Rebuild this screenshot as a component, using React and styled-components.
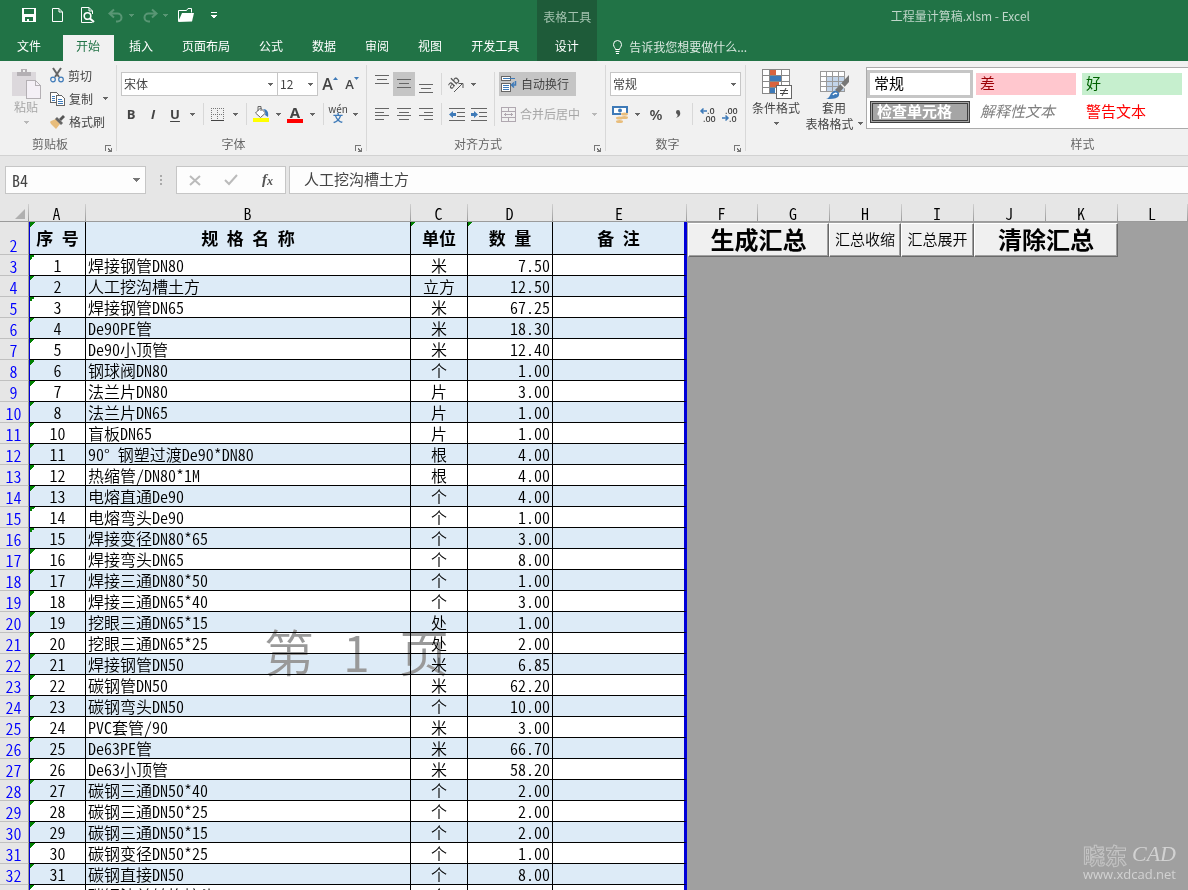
import styled, { createGlobalStyle, css } from "styled-components"

const GlobalStyle = createGlobalStyle`
  * {
    box-sizing: border-box;
  }

  body {
    margin: 0;
    overflow: hidden;
    background: #e6e6e6;
    font-family: "Noto Sans CJK SC", "Noto Sans", sans-serif;
    font-size: 12px;
    line-height: 16px;
    color: #444;
  }

  button, input, select {
    margin: 0;
    padding: 0;
    border: 0;
    border-radius: 0;
    background: transparent;
    font: inherit;
    color: inherit;
  }

  svg {
    overflow: visible;
  }
`

const App = styled.div`
  display: flex;
  flex-direction: column;
  height: 100vh;
  overflow: hidden;
`

/* ---------- title bar and tabs ---------- */

const Header = styled.header`
  display: flex;
  flex: none;
  height: 61px;
  background: #217346;
  color: #fff;
`

const HeaderPart = styled.div`
  display: flex;
  flex-direction: column;
  flex: ${({ $grow }) => ($grow ? 1 : "none")};
`

const QuickAccess = styled.div`
  display: flex;
  align-items: center;
  height: 35px;
  padding: 0 0 5px 15px;
`

const QuickButton = styled.button`
  display: flex;
  align-items: center;
  justify-content: center;
  gap: 5px;
  width: ${({ $w }) => $w}px;
  height: 24px;
  opacity: ${({ disabled }) => (disabled ? 0.25 : 1)};
`

const TabList = styled.nav`
  display: flex;
  gap: 2px;
  padding: 0 4px;
`

const Tab = styled.button`
  height: 26px;
  padding: 0 14px 4px 13px;
  white-space: nowrap;

  ${({ $wide }) => $wide && css`
    padding-right: 20px;
  `}

  ${({ $active }) => $active && css`
    background: #f1f1f1;
    color: #217346;
  `}
`

const ContextGroup = styled.div`
  display: flex;
  flex-direction: column;
  align-items: center;
  width: 60px;
  background: #1e5b39;
`

const ContextTitle = styled.span`
  height: 35px;
  padding-top: 9px;
  color: #a3c2af;
`

const WindowTitle = styled.div`
  height: 35px;
  padding: 8px 158px 0 0;
  text-align: right;
  color: #bfd6c9;
`

const TellMe = styled.button`
  display: flex;
  align-items: center;
  gap: 6px;
  height: 26px;
  padding: 0 0 2px 15px;
  color: #d9e8df;
`

/* ---------- ribbon ---------- */

const Ribbon = styled.div`
  display: flex;
  flex: none;
  height: 95px;
  background: #f1f1f1;
  border-bottom: 1px solid #d2d2d2;
  overflow: hidden;
`

const GroupBox = styled.section`
  display: flex;
  flex-direction: column;
  flex: none;
  width: ${({ $w }) => $w}px;
  background: linear-gradient(#d8d8d8, #d8d8d8) right 4px / 1px 86px no-repeat;
`

const GroupBody = styled.div`
  display: flex;
  height: 74px;
  padding: 0 4px;
`

const GroupFoot = styled.div`
  display: flex;
  align-items: center;
  height: 18px;
  padding-right: 1px;
  color: #666;
`

const GroupLabel = styled.span`
  flex: 1;
  text-align: center;
`

const Launcher = styled.button`
  width: 16px;
  height: 16px;
  padding-top: 4px;
`

const Rows = styled.div`
  display: flex;
  flex-direction: column;
  gap: 6px;
  padding-top: 11px;
`

const Row = styled.div`
  display: flex;
  align-items: center;
  height: 24px;
`

const Tool = styled.button`
  display: flex;
  align-items: center;
  justify-content: center;
  width: ${({ $w }) => $w || 20}px;
  height: 24px;
  background: ${({ $on }) => ($on ? "#c5c5c5" : "transparent")};
`

const Letter = styled.span`
  font-family: "Open Sans", sans-serif;
  font-size: ${({ $size }) => $size || 13}px;
  font-weight: ${({ $plain }) => ($plain ? 600 : 700)};
  font-style: ${({ $italic }) => ($italic ? "italic" : "normal")};
  text-decoration: ${({ $under }) => ($under ? "underline" : "none")};
  text-underline-offset: 2px;
`

const Divider = styled.span`
  width: 1px;
  height: ${({ $tall }) => ($tall ? 54 : 22)}px;
  margin: ${({ $tall }) => ($tall ? "11px 4px 0" : "0 4px")};
  background: #d8d8d8;
`

const LabelTool = styled.button`
  display: flex;
  align-items: center;
  gap: 4px;
  height: 24px;
  padding: 0 7px 0 2px;
  white-space: nowrap;
  background: ${({ $on }) => ($on ? "#c5c5c5" : "transparent")};
  color: ${({ disabled }) => (disabled ? "#a6a6a6" : "#444")};
`

const Stack = styled.div`
  display: flex;
  flex-direction: column;
  padding-top: 3px;

  ${Row}, ${LabelTool} {
    height: 23px;
  }

  ${LabelTool} {
    padding-right: 5px;
  }
`

const BigTool = styled.button`
  display: flex;
  flex-direction: column;
  align-items: center;
  width: ${({ $w }) => $w}px;
  padding-top: 7px;
  white-space: nowrap;
  line-height: 15px;
  color: ${({ disabled }) => (disabled ? "#a6a6a6" : "#444")};
`

const CaretLine = styled.span`
  display: flex;
  align-items: center;
  gap: 4px;
  height: 16px;
`

const SelectBox = styled.label`
  display: flex;
  align-items: center;
  position: relative;
  width: ${({ $w }) => $w}px;
  height: 24px;
  background: #fff;
  border: 1px solid #c6c6c6;
  margin-right: ${({ $join }) => ($join ? "-1px" : 0)};

  select {
    width: 100%;
    height: 22px;
    padding: 0 2px 1px;
    appearance: none;
    outline: 0;
  }

  svg {
    position: absolute;
    right: 4px;
    pointer-events: none;
  }
`

const Gallery = styled.div`
  display: grid;
  grid-template-columns: repeat(5, 100px);
  grid-template-rows: 22px 22px;
  gap: 6px;
  flex: 1;
  height: 62px;
  margin-top: 6px;
  padding: 5px 3px;
  background: #fff;
  border: 1px solid #ababab;
  font-size: 15px;
  line-height: 18px;
`

const StyleCell = styled.button`
  display: flex;
  align-items: center;
  padding: 0 4px 3px;
  text-align: left;
  color: ${({ $fg }) => $fg || "#000"};
  background: ${({ $bg }) => $bg || "#fff"};
  font-style: ${({ $italic }) => ($italic ? "italic" : "normal")};
  font-weight: ${({ $bold }) => ($bold ? 700 : 400)};
  outline: ${({ $picked }) => ($picked ? "3px solid #c6c6c6" : "0")};
  border: ${({ $double }) => ($double ? "3px double #3f3f3f" : "0")};
`

/* ---------- formula bar ---------- */

const FormulaBar = styled.div`
  display: flex;
  flex: none;
  height: 48px;
  padding: 10px 0 10px 5px;
`

const Box = styled.div`
  display: flex;
  align-items: center;
  width: ${({ $w }) => $w}px;
  height: 28px;
  background: #fdfdfd;
  border: 1px solid #c6c6c6;
`

const NameInput = styled.input`
  flex: 1;
  width: 100px;
  padding-left: 6px;
  font-size: 16px;
  font-feature-settings: "hwid";
  outline: 0;
`

const Dots = styled.span`
  width: 30px;
  display: flex;
  align-items: center;
  justify-content: center;
`

const FormulaInput = styled.input`
  flex: 1;
  min-width: 0;
  height: 28px;
  margin-left: 3px;
  padding: 0 14px 4px;
  background: #fdfdfd;
  border: 1px solid #c6c6c6;
  border-right: 0;
  font-size: 15px;
  outline: 0;
`

/* ---------- sheet ---------- */

const Sheet = styled.main`
  position: relative;
  flex: 1;
  overflow: hidden;
  background: #a0a0a0;
`

const Grid = styled.table`
  width: 100%;
  table-layout: fixed;
  border-collapse: separate;
  border-spacing: 0;
  font-size: 16px;
  font-weight: 350;
  line-height: 20px;
  font-feature-settings: "hwid";
  color: #000;
`

const ColHead = styled.th`
  height: 18px;
  padding: 2px 2px 0 0;
  font-weight: 350;
  line-height: 15px;
  background: linear-gradient(#d0d0d0, #9b9b9b) right top / 1px 100% no-repeat #e6e6e6;
  border-bottom: 1px solid #9b9b9b;
`

const Corner = styled(ColHead)`
  svg {
    display: block;
    margin-left: 15px;
  }
`

const RowHead = styled.th`
  padding: 0 1px 0 0;
  vertical-align: bottom;
  font-weight: 350;
  line-height: 17px;
  color: #00f;
  background: #e6e6e6;
  border-right: 1px solid #9b9b9b;
  border-bottom: 1px solid #c0c0c0;
`

const Cell = styled.td`
  height: ${({ $head }) => ($head ? 33 : 21)}px;
  padding: 0 2px;
  white-space: pre;
  text-align: ${({ $align }) => $align || "center"};
  border-right: 1px solid #000;
  border-bottom: 1px solid #000;
  background-color: ${({ $band }) => ($band ? "#ddebf7" : "#fff")};

  ${({ $head }) => $head && css`
    font-size: 17px;
    font-weight: 700;
  `}

  ${({ $mark }) => $mark && css`
    background-image: linear-gradient(135deg, #008000 50%, transparent 50%);
    background-size: 5px 5px;
    background-repeat: no-repeat;
  `}

  ${({ $first }) => $first && css`
    border-left: 1px solid #0000d8;
  `}

  ${({ $last }) => $last && css`
    border-right: 3px solid #0000d8;
  `}
`

const OutsideCell = styled.td`
  padding: 1px 0 0 1px;
  vertical-align: top;
`

const MacroBar = styled.div`
  display: flex;
`

const MacroButton = styled.button`
  width: ${({ $w }) => $w}px;
  height: 34px;
  padding-bottom: 3px;
  background: #f0f0f0;
  border: 1px solid;
  border-color: #fff #696969 #696969 #fff;
  box-shadow: inset -1px -1px #a0a0a0;
  font-size: 15px;
  font-weight: 350;
  line-height: 28px;
  white-space: nowrap;

  ${({ $big }) => $big && css`
    font-size: 24px;
    font-weight: 700;
  `}
`

const PageMark = styled.div`
  position: absolute;
  top: 414px;
  left: 264px;
  display: flex;
  gap: 30px;
  font-size: 50px;
  font-weight: 350;
  line-height: 64px;
  font-feature-settings: "hwid";
  color: #999;
  mix-blend-mode: darken;
  pointer-events: none;
`

const SiteMark = styled.div`
  position: absolute;
  right: 12px;
  bottom: 7px;
  color: #d2d2d2;
  font-family: "Open Sans", sans-serif;
  font-size: 13px;
  line-height: 18px;
  pointer-events: none;
`

const SiteLogo = styled.div`
  display: flex;
  align-items: center;
  justify-content: flex-end;
  gap: 5px;
  height: 23px;
`

const LogoHan = styled.span`
  font-family: "Noto Sans CJK SC", sans-serif;
  font-size: 22px;
  font-weight: 700;
  color: #a0a0a0;
  -webkit-text-stroke: 1px #c4c4c4;
`

const LogoLatin = styled.span`
  font-family: "Liberation Serif", serif;
  font-size: 22px;
  font-style: italic;
`

/* ---------- icons ---------- */

const Svg = ({ w, h, children, soft }) => (
  <svg width={w} height={h} viewBox={`0 0 ${w} ${h}`} fill="none" shapeRendering={soft ? "auto" : "crispEdges"} aria-hidden="true">
    {children}
  </svg>
)

const Caret = ({ color = "#666" }) => (
  <Svg w={5} h={3}><path d="M0 0h5v1h-1v1h-1v1h-1v-1h-1v-1h-1z" fill={color} /></Svg>
)

const SaveIcon = () => (
  <Svg w={14} h={14}><path fillRule="evenodd" d="M0 0h14v14H0zM2 1v5h10V1zM3 9v4h2v-2h2v2h4V9z" fill="#fff" /></Svg>
)

const NewIcon = () => (
  <Svg w={11} h={14} soft><path d="M.5.5h6.500l3.500 3.500v9.500H.5zM7 .5V4h3.500" stroke="#fff" /></Svg>
)

const PreviewIcon = () => (
  <Svg w={14} h={16} soft>
    <path d="M11.500 15.500H.5V.5H8l3.500 3.500v3M8 .5V4h3.500" stroke="#fff" />
    <circle cx="6.500" cy="9" r="3.300" stroke="#fff" strokeWidth="1.600" />
    <path d="M9 11.500l4 3.500" stroke="#fff" strokeWidth="2" />
  </Svg>
)

const UndoIcon = () => (
  <Svg w={16} h={13} soft><path d="M6 .5L1.500 4.500 6 8.500M2 4.500h7.500a4 4 0 0 1 0 8H8" stroke="#fff" strokeWidth="2" /></Svg>
)

const RedoIcon = () => (
  <Svg w={16} h={13} soft><path d="M10 .5l4.500 4-4.500 4M14 4.500H6.500a4 4 0 0 0 0 8H8" stroke="#fff" strokeWidth="2" /></Svg>
)

const FolderIcon = () => (
  <Svg w={16} h={14} soft>
    <path d="M.5 13V2.500h8l1.500-2h3.500v4" stroke="#fff" />
    <path d="M0 14L4 5h12l-2 8.500z" fill="#fff" />
  </Svg>
)

const MoreIcon = () => (
  <Svg w={6} h={7}><path d="M0 0h6v1H0zM0 3h6v1h-1v1h-1v1H2V5H1V4H0z" fill="#fff" /></Svg>
)

const BulbIcon = () => (
  <Svg w={11} h={14} soft>
    <path d="M3.500 9.500C3.500 8 1.500 7 1.500 4.500a4 4 0 0 1 8 0c0 2.500-2 3.500-2 5zM3.500 11.500h4M4 13.500h3" stroke="#fff" />
  </Svg>
)

const LauncherIcon = () => (
  <Svg w={16} h={8}>
    <path d="M5 6V0h6v1H6v5zM8 3h1v1h1v1h1V3h1v4H8V6h1V5H8z" fill="#777" />
  </Svg>
)

const PasteIcon = () => (
  <Svg w={30} h={31}>
    <path d="M1 4h24v24H1z" fill="#dcd8dc" />
    <path d="M6 8V4h4V1h6v3h4v4z" fill="#b4b0b4" />
    <path d="M12 2h2v2h-2z" fill="#f1f1f1" />
    <path d="M15 12h9l5 5v13H15z" fill="#f4f0f6" stroke="#b4b0b4" />
    <path d="M24 12v5h5" stroke="#b4b0b4" />
  </Svg>
)

const CutIcon = () => (
  <Svg w={14} h={15} soft>
    <path d="M3 0l6 9M11 0L5 9" stroke="#666" strokeWidth="2" />
    <circle cx="3" cy="11.500" r="2.300" stroke="#3e7ab8" strokeWidth="1.200" />
    <circle cx="11" cy="11.500" r="2.300" stroke="#3e7ab8" strokeWidth="1.200" />
  </Svg>
)

const CopyIcon = () => (
  <Svg w={15} h={14}>
    <path d="M.5.5h6l2 2v8h-8z" fill="#fff" stroke="#666" />
    <path d="M2 4h3M2 6h3M2 8h3" stroke="#3e7ab8" />
    <path d="M6.500 3.500h5l3 3v7h-8z" fill="#fff" stroke="#666" />
    <path d="M8 7.500h4M8 9.500h5M8 11.500h5" stroke="#3e7ab8" />
  </Svg>
)

const BrushIcon = () => (
  <Svg w={15} h={14} soft>
    <path d="M1 6l5-2 4 5-4 5-5-5-1-2z" fill="#e8bd7c" />
    <path d="M5 4l2-2 6 6-2 2z" fill="#666" />
    <path d="M9 4l4-4 2 2-4 4z" fill="#555" />
  </Svg>
)

const SizeIcon = ({ up }) => (
  <Svg w={5} h={16} soft>
    <path d={up ? "M0 4l2.500-3L5 4z" : "M0 1h5L2.500 4z"} fill="#3e7ab8" />
  </Svg>
)

const BorderIcon = () => (
  <Svg w={14} h={13}>
    <path d="M.5 0v12M6.500 0v12M12.500 0v12M0 .5h13M0 6.500h13" stroke="#777" strokeDasharray="1 1" />
    <path d="M0 12.500h13" stroke="#444" />
  </Svg>
)

const FillIcon = () => (
  <Svg w={17} h={17} soft>
    <path d="M2.500 7l5-5 5 5-5 4.500z" fill="#fff" stroke="#666" />
    <path d="M5 5V.5h3V5" stroke="#666" />
    <path d="M10 3c4 0 6 3 5 8l-3-2c1-2 0-4-2-6z" fill="#3e7ab8" />
    <path d="M0 12h16v4H0z" fill="#ff0" />
  </Svg>
)

const FontColorBox = styled.span`
  display: flex;
  justify-content: center;
  width: 16px;
  height: 17px;
  border-bottom: 4px solid #f00;
  line-height: 12px;
`

const Pinyin = styled.span`
  display: flex;
  flex-direction: column;
  align-items: center;
  font-size: 10px;
  line-height: 8px;

  b {
    line-height: 10px;
    color: #3e7ab8;
  }
`

const Lines = ({ d }) => <Svg w={14} h={18}><path d={d} stroke="#666" /></Svg>

const alignIcons = {
  top: "M0 .5h14M2 4.500h10M0 8.500h14",
  middle: "M0 4.500h14M2 8.500h10M0 12.500h14",
  bottom: "M0 9.500h14M2 13.500h10M0 17.500h14",
  left: "M0 3.500h14M0 7.500h9M0 10.500h14M0 14.500h9",
  center: "M0 3.500h14M2 7.500h10M0 10.500h14M2 14.500h10",
  right: "M0 3.500h14M5 7.500h9M0 10.500h14M5 14.500h9",
}

const OrientIcon = () => (
  <Svg w={17} h={17} soft>
    <text x="0" y="10" transform="rotate(-45 6 8)" fontFamily="Open Sans" fontSize="11" fontWeight="600" fill="#555">ab</text>
    <path d="M6 16l8-8M10.500 7.500H15V12" stroke="#555" />
  </Svg>
)

const IndentIcon = ({ out }) => (
  <Svg w={16} h={13}>
    <path d="M0 .5h16M8 4.500h8M8 8.500h8M0 12.500h16" stroke="#666" />
    <path d={out ? "M0 6.500l4-3.500v2h3v3H4v2z" : "M7 6.500L3 3v2H0v3h3v2z"} fill="#3e7ab8" shapeRendering="auto" />
  </Svg>
)

const WrapIcon = () => (
  <Svg w={16} h={16}>
    <path d="M.5.5h9v4h-9zM.5 7.500h9v8h-9z" fill="#fff" stroke="#666" />
    <path d="M2 2.500h12M2 9.500h6M2 11.500h6M2 13.500h6" stroke="#3e7ab8" />
    <path d="M14.500 5v4H11M13 6.500L10.500 9l2.500 2.500" stroke="#3e7ab8" strokeWidth="1.500" shapeRendering="auto" />
  </Svg>
)

const MergeIcon = () => (
  <Svg w={15} h={15}>
    <path d="M.5.5h14v14H.5zM0 4.500h15M0 10.500h15M7.500 0v4M7.500 11v4M3 7.500h9M4.500 6v3M10.500 6v3" stroke="#b0a8b0" />
  </Svg>
)

const CurrencyIcon = () => (
  <Svg w={17} h={17} soft>
    <path d="M0 0h16v9H0z" fill="#3e7ab8" />
    <path d="M2 2h12v5H2z" fill="#fff" />
    <circle cx="8" cy="4.500" r="2" fill="#3e7ab8" />
    <path d="M9 7h7v6H9zM4 11h7v5H4z" fill="#f1f1f1" />
    <ellipse cx="12.500" cy="8" rx="3.500" ry="1.500" fill="#e8bd7c" />
    <ellipse cx="12.500" cy="11.500" rx="3.500" ry="1.500" fill="#e8bd7c" />
    <ellipse cx="7.500" cy="12" rx="3.500" ry="1.500" fill="#e8bd7c" />
    <ellipse cx="7.500" cy="15.500" rx="3.500" ry="1.500" fill="#e8bd7c" />
  </Svg>
)

const DecimalIcon = ({ more }) => (
  <Svg w={16} h={15} soft>
    <g fontFamily="Open Sans" fontSize="9" fontWeight="600" fill="#444">
      <text x={more ? 7 : 3} y="7">{more ? ".0" : ".00"}</text>
      <text x={more ? 3 : 7} y="15">{more ? ".00" : ".0"}</text>
    </g>
    <path d={more ? "M7 4H1M3.500 1.500L1 4l2.500 2.500" : "M0 11h6M3.500 8.500L6 11l-2.500 2.500"} stroke="#3e7ab8" strokeWidth="1.500" />
  </Svg>
)

const ConditionIcon = () => (
  <Svg w={31} h={32}>
    <path d="M1.500 1.500h27v24h-27z" fill="#fff" />
    <path d="M9 2h6v5H9zM9 14h9v5H9z" fill="#d9643f" />
    <path d="M9 8h11v5H9zM9 20h5v5H9z" fill="#3e7ab8" />
    <path d="M1.500 1.500h27v24h-27zM1 7.500h27M1 13.500h27M1 19.500h27M8.500 1v24M20.500 1v24" stroke="#888" />
    <path d="M15.500 17.500h15v13h-15z" fill="#fff" stroke="#666" />
    <path d="M19 22.500h8M19 25.500h8M25 20l-4 8" stroke="#444" shapeRendering="auto" />
  </Svg>
)

const TableStyleIcon = () => (
  <Svg w={31} h={32}>
    <path d="M1.500 3.500h24v20h-24z" fill="#fff" />
    <path d="M8 9h17v14H8z" fill="#c3d5ea" />
    <path d="M1.500 3.500h24v20h-24zM1 8.500h24M1 13.500h24M1 18.500h24M7.500 3v20M13.500 3v20M19.500 3v20" stroke="#999" />
    <g shapeRendering="auto">
      <path d="M30 7v7L20 25l-4-3z" fill="#777" />
      <path d="M22 16l4 4" stroke="#f1f1f1" strokeWidth="1.500" />
      <path d="M7 31c5-1 3-6 8-8 4-1 7 3 4 6-3 2-7 2-12 2z" fill="#3e7ab8" />
      <path d="M14 27c1-2 3-2 4-1" stroke="#fff" strokeWidth="1.500" />
    </g>
  </Svg>
)

const CornerIcon = () => (
  <Svg w={10} h={10} soft><path d="M10 0v10H0z" fill="#b0b0b0" /></Svg>
)

/* ---------- data ---------- */

const tabs = ["文件", "开始", "插入", "页面布局", "公式", "数据", "审阅", "视图", "开发工具"]

const columns = [
  ["A", 57], ["B", 325], ["C", 57], ["D", 85], ["E", 134], ["F", 71], ["G", 72],
  ["H", 72], ["I", 72], ["J", 72], ["K", 72], ["L", 72],
]

const rows = [
  ["1", "焊接钢管DN80", "米", "7.50"],
  ["2", "人工挖沟槽土方", "立方", "12.50"],
  ["3", "焊接钢管DN65", "米", "67.25"],
  ["4", "De90PE管", "米", "18.30"],
  ["5", "De90小顶管", "米", "12.40"],
  ["6", "钢球阀DN80", "个", "1.00"],
  ["7", "法兰片DN80", "片", "3.00"],
  ["8", "法兰片DN65", "片", "1.00"],
  ["10", "盲板DN65", "片", "1.00"],
  ["11", "90° 钢塑过渡De90*DN80", "根", "4.00"],
  ["12", "热缩管/DN80*1M", "根", "4.00"],
  ["13", "电熔直通De90", "个", "4.00"],
  ["14", "电熔弯头De90", "个", "1.00"],
  ["15", "焊接变径DN80*65", "个", "3.00"],
  ["16", "焊接弯头DN65", "个", "8.00"],
  ["17", "焊接三通DN80*50", "个", "1.00"],
  ["18", "焊接三通DN65*40", "个", "3.00"],
  ["19", "挖眼三通DN65*15", "处", "1.00"],
  ["20", "挖眼三通DN65*25", "处", "2.00"],
  ["21", "焊接钢管DN50", "米", "6.85"],
  ["22", "碳钢管DN50", "米", "62.20"],
  ["23", "碳钢弯头DN50", "个", "10.00"],
  ["24", "PVC套管/90", "米", "3.00"],
  ["25", "De63PE管", "米", "66.70"],
  ["26", "De63小顶管", "米", "58.20"],
  ["27", "碳钢三通DN50*40", "个", "2.00"],
  ["28", "碳钢三通DN50*25", "个", "2.00"],
  ["29", "碳钢三通DN50*15", "个", "2.00"],
  ["30", "碳钢变径DN50*25", "个", "1.00"],
  ["31", "碳钢直接DN50", "个", "8.00"],
  ["32", "碳钢法兰转换接头", "个", "1.00"],
]

/* ---------- components ---------- */

const Group = ({ label, width, launcher = true, children }) => (
  <GroupBox $w={width}>
    <GroupBody>{children}</GroupBody>
    <GroupFoot>
      <GroupLabel>{label}</GroupLabel>
      {launcher && <Launcher aria-label={label}><LauncherIcon /></Launcher>}
    </GroupFoot>
  </GroupBox>
)

const Select = ({ label, value, width, join }) => (
  <SelectBox $w={width} $join={join}>
    <select aria-label={label} defaultValue={value}>
      <option>{value}</option>
    </select>
    <Caret />
  </SelectBox>
)

const CaretTool = ({ label, color }) => (
  <Tool $w={14} aria-label={label}><Caret color={color} /></Tool>
)

const TopBar = () => (
  <Header>
    <HeaderPart>
      <QuickAccess>
        <QuickButton $w={28} aria-label="保存"><SaveIcon /></QuickButton>
        <QuickButton $w={28} aria-label="新建"><NewIcon /></QuickButton>
        <QuickButton $w={34} aria-label="打印预览"><PreviewIcon /></QuickButton>
        <QuickButton $w={32} aria-label="撤消" disabled><UndoIcon /><Caret color="#fff" /></QuickButton>
        <QuickButton $w={36} aria-label="恢复" disabled><RedoIcon /><Caret color="#fff" /></QuickButton>
        <QuickButton $w={26} aria-label="打开"><FolderIcon /></QuickButton>
        <QuickButton $w={30} aria-label="自定义"><MoreIcon /></QuickButton>
      </QuickAccess>
      <TabList>
        {tabs.map((tab, index) => (
          <Tab key={tab} $wide={index === 0} $active={index === 1}>{tab}</Tab>
        ))}
      </TabList>
    </HeaderPart>
    <ContextGroup>
      <ContextTitle>表格工具</ContextTitle>
      <Tab>设计</Tab>
    </ContextGroup>
    <HeaderPart $grow>
      <WindowTitle>工程量计算稿.xlsm - Excel</WindowTitle>
      <TellMe><BulbIcon />告诉我您想要做什么...</TellMe>
    </HeaderPart>
  </Header>
)

const RibbonBar = () => (
  <Ribbon>
    <Group label="剪贴板" width={117}>
      <BigTool $w={44} disabled>
        <PasteIcon />
        粘贴
        <CaretLine><Caret color="#b8b8b8" /></CaretLine>
      </BigTool>
      <Stack>
        <LabelTool><CutIcon />剪切</LabelTool>
        <Row>
          <LabelTool><CopyIcon />复制</LabelTool>
          <CaretTool label="复制选项" />
        </Row>
        <LabelTool><BrushIcon />格式刷</LabelTool>
      </Stack>
    </Group>

    <Group label="字体" width={250}>
      <Rows>
        <Row>
          <Select label="字体" value="宋体" width={157} join />
          <Select label="字号" value="12" width={41} />
          <Tool $w={24} aria-label="增大字号"><Letter $plain $size={16}>A</Letter><SizeIcon up /></Tool>
          <Tool aria-label="减小字号"><Letter $plain $size={13}>A</Letter><SizeIcon /></Tool>
        </Row>
        <Row>
          <Tool><Letter>B</Letter></Tool>
          <Tool $w={24}><Letter $italic>I</Letter></Tool>
          <Tool><Letter $under>U</Letter></Tool>
          <CaretTool label="下划线" />
          <Divider />
          <Tool aria-label="边框"><BorderIcon /></Tool>
          <CaretTool label="边框选项" />
          <Divider />
          <Tool aria-label="填充颜色"><FillIcon /></Tool>
          <CaretTool label="填充选项" />
          <Tool aria-label="字体颜色"><FontColorBox><Letter $size={15}>A</Letter></FontColorBox></Tool>
          <CaretTool label="颜色选项" />
          <Divider />
          <Tool><Pinyin>wén<b>文</b></Pinyin></Tool>
          <CaretTool label="拼音选项" />
        </Row>
      </Rows>
    </Group>

    <Group label="对齐方式" width={239}>
      <Rows>
        <Row>
          <Tool $w={22} aria-label="顶端对齐"><Lines d={alignIcons.top} /></Tool>
          <Tool $w={22} $on aria-label="垂直居中"><Lines d={alignIcons.middle} /></Tool>
          <Tool $w={22} aria-label="底端对齐"><Lines d={alignIcons.bottom} /></Tool>
          <Divider />
          <Tool aria-label="方向"><OrientIcon /></Tool>
          <CaretTool label="方向选项" />
        </Row>
        <Row>
          <Tool $w={22} aria-label="左对齐"><Lines d={alignIcons.left} /></Tool>
          <Tool $w={22} aria-label="居中"><Lines d={alignIcons.center} /></Tool>
          <Tool $w={22} aria-label="右对齐"><Lines d={alignIcons.right} /></Tool>
          <Divider />
          <Tool $w={22} aria-label="减少缩进量"><IndentIcon out /></Tool>
          <Tool $w={22} aria-label="增加缩进量"><IndentIcon /></Tool>
        </Row>
      </Rows>
      <Divider $tall />
      <Rows>
        <Row><LabelTool $on><WrapIcon />自动换行</LabelTool></Row>
        <Row>
          <LabelTool disabled><MergeIcon />合并后居中</LabelTool>
          <CaretTool label="合并选项" color="#b8b8b8" />
        </Row>
      </Rows>
    </Group>

    <Group label="数字" width={140}>
      <Rows>
        <Row><Select label="数字格式" value="常规" width={131} /></Row>
        <Row>
          <Tool aria-label="会计数字格式"><CurrencyIcon /></Tool>
          <CaretTool label="货币选项" />
          <Tool $w={24}><Letter $plain $size={15}>%</Letter></Tool>
          <Tool aria-label="千位分隔样式">
            <Svg w={6} h={8} soft><path d="M1 2a2 2 0 0 1 4 0c1 3-1 5-4 6 2-2 2-3 1-4a2 2 0 0 1-1-2z" fill="#555" /></Svg>
          </Tool>
          <Divider />
          <Tool $w={22} aria-label="增加小数位数"><DecimalIcon more /></Tool>
          <Tool $w={22} aria-label="减少小数位数"><DecimalIcon /></Tool>
        </Row>
      </Rows>
    </Group>

    <Group label="样式" width={674} launcher={false}>
      <BigTool $w={52}>
        <ConditionIcon />
        条件格式
        <CaretLine><Caret /></CaretLine>
      </BigTool>
      <BigTool $w={64}>
        <TableStyleIcon />
        套用
        <CaretLine>表格格式<Caret /></CaretLine>
      </BigTool>
      <Gallery>
        <StyleCell $picked>常规</StyleCell>
        <StyleCell $fg="#9c0006" $bg="#ffc7ce">差</StyleCell>
        <StyleCell $fg="#006100" $bg="#c6efce">好</StyleCell>
        <span />
        <span />
        <StyleCell $fg="#fff" $bg="#a5a5a5" $bold $double>检查单元格</StyleCell>
        <StyleCell $fg="#7f7f7f" $italic>解释性文本</StyleCell>
        <StyleCell $fg="#f00">警告文本</StyleCell>
      </Gallery>
    </Group>
  </Ribbon>
)

const Formula = () => (
  <FormulaBar>
    <Box $w={141}>
      <NameInput aria-label="名称框" defaultValue="B4" />
      <Tool $w={18} aria-label="名称列表">
        <Svg w={7} h={4}><path d="M0 0h7v1H6v1H5v1H4v1H3V3H2V2H1V1H0z" fill="#777" /></Svg>
      </Tool>
    </Box>
    <Dots><Svg w={2} h={10}><path d="M0 0h2v2H0zM0 4h2v2H0zM0 8h2v2H0z" fill="#aaa" /></Svg></Dots>
    <Box $w={110}>
      <Tool $w={36} aria-label="取消"><Svg w={12} h={11} soft><path d="M1 1l10 9M11 1L1 10" stroke="#bbb" strokeWidth="2" /></Svg></Tool>
      <Tool $w={36} aria-label="输入"><Svg w={14} h={12} soft><path d="M1 6l4 4 8-9" stroke="#bbb" strokeWidth="2" /></Svg></Tool>
      <Tool $w={36} aria-label="插入函数">
        <Svg w={14} h={16} soft>
          <g fontFamily="Liberation Serif" fontStyle="italic" fontWeight="700" fill="#555">
            <text x="2" y="12" fontSize="15">f</text>
            <text x="7" y="13" fontSize="12">x</text>
          </g>
        </Svg>
      </Tool>
    </Box>
    <FormulaInput aria-label="编辑栏" defaultValue="人工挖沟槽土方" />
  </FormulaBar>
)

const Worksheet = () => (
  <Sheet>
    <Grid>
      <colgroup>
        <col style={{ width: 29 }} />
        {columns.map(([name, width]) => (
          <col key={name} style={name === "L" ? undefined : { width }} />
        ))}
      </colgroup>
      <thead>
        <tr>
          <Corner aria-label="全选"><CornerIcon /></Corner>
          {columns.map(([name]) => <ColHead key={name}>{name}</ColHead>)}
        </tr>
      </thead>
      <tbody>
        <tr>
          <RowHead>2</RowHead>
          <Cell $head $band $mark $first>序 号</Cell>
          <Cell $head $band>规 格 名 称</Cell>
          <Cell $head $band $mark>单位</Cell>
          <Cell $head $band $mark>数 量</Cell>
          <Cell $head $band $last>备 注</Cell>
          <OutsideCell colSpan={7} rowSpan={rows.length + 1}>
            <MacroBar>
              <MacroButton $w={141} $big>生成汇总</MacroButton>
              <MacroButton $w={72}>汇总收缩</MacroButton>
              <MacroButton $w={73}>汇总展开</MacroButton>
              <MacroButton $w={144} $big>清除汇总</MacroButton>
            </MacroBar>
          </OutsideCell>
        </tr>
        {rows.map(([no, name, unit, amount], index) => (
          <tr key={no}>
            <RowHead>{index + 3}</RowHead>
            <Cell $band={index % 2 === 1} $mark $first>{no}</Cell>
            <Cell $band={index % 2 === 1} $align="left">{name}</Cell>
            <Cell $band={index % 2 === 1}>{unit}</Cell>
            <Cell $band={index % 2 === 1} $align="right">{amount}</Cell>
            <Cell $band={index % 2 === 1} $last />
          </tr>
        ))}
      </tbody>
    </Grid>
    <PageMark><span>第</span><span>1</span><span>页</span></PageMark>
    <SiteMark>
      <SiteLogo><LogoHan>晓东</LogoHan><LogoLatin>CAD</LogoLatin></SiteLogo>
      www.xdcad.net
    </SiteMark>
  </Sheet>
)

export default function Workbook() {
  return (
    <App>
      <GlobalStyle />
      <TopBar />
      <RibbonBar />
      <Formula />
      <Worksheet />
    </App>
  )
}
